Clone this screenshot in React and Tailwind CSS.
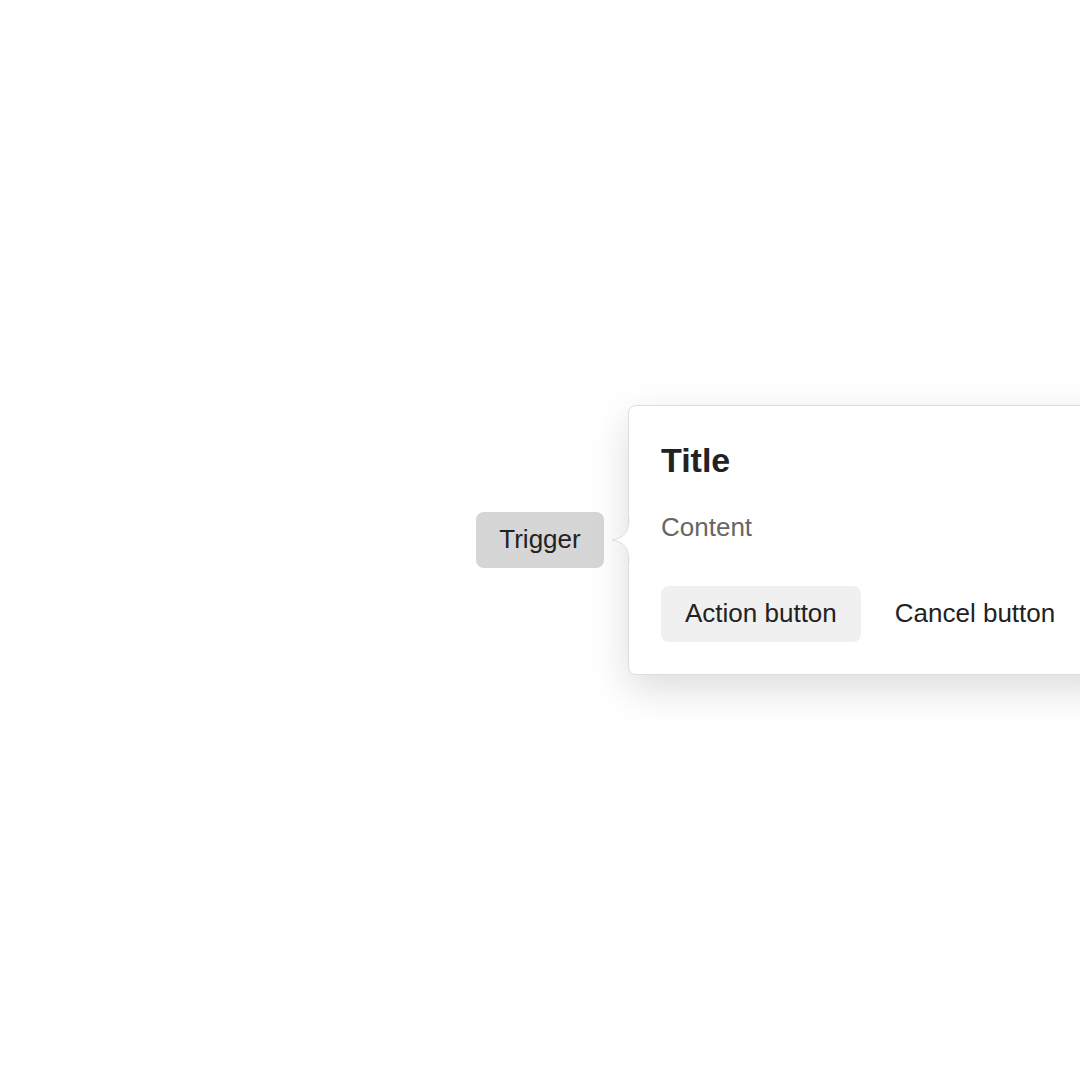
import React from 'react';

const Popover = () => {
  return (
    <div className="absolute left-[calc(100%+24px)] top-1/2 -translate-y-1/2 w-[500px] bg-white border border-[#dedede] rounded-lg shadow-[0_14px_40px_rgba(0,0,0,0.14)]">
      {/* Arrow */}
      <svg
        className="absolute left-[-17px] top-1/2 -translate-y-1/2"
        width="18"
        height="44"
        viewBox="0 0 18 44"
      >
        <path d="M17 0 C17 14 12 20 0 22 C12 24 17 30 17 44 L18 44 L18 0 Z" fill="#ffffff" />
        <path d="M17 0 C17 14 12 20 0 22 C12 24 17 30 17 44" fill="none" stroke="#dedede" strokeWidth="1" />
      </svg>

      <div className="p-8">
        <h2 className="text-[34px] leading-[44px] font-bold text-[#222222]">Title</h2>
        <p className="mt-[26px] text-[26px] leading-[39px] text-[#666666]">Content</p>
        <div className="mt-[39px] flex items-center gap-[10px]">
          <button className="h-[56px] px-6 pb-[2px] rounded-lg bg-[#f0f0f0] text-[26px] text-[#222222] whitespace-nowrap">
            Action button
          </button>
          <button className="h-[56px] px-6 pb-[2px] rounded-lg text-[26px] text-[#222222] whitespace-nowrap">
            Cancel button
          </button>
        </div>
      </div>
    </div>
  );
};

const App = () => {
  return (
    <div className="w-full h-screen overflow-hidden bg-white flex items-center justify-center font-['Liberation_Sans',Arial,sans-serif]">
      <div className="relative">
        <button className="h-[56px] w-[128px] pb-[2px] rounded-lg bg-[#d6d6d6] text-[26px] text-[#222222]">
          Trigger
        </button>
        <Popover />
      </div>
    </div>
  );
};

export default App;
